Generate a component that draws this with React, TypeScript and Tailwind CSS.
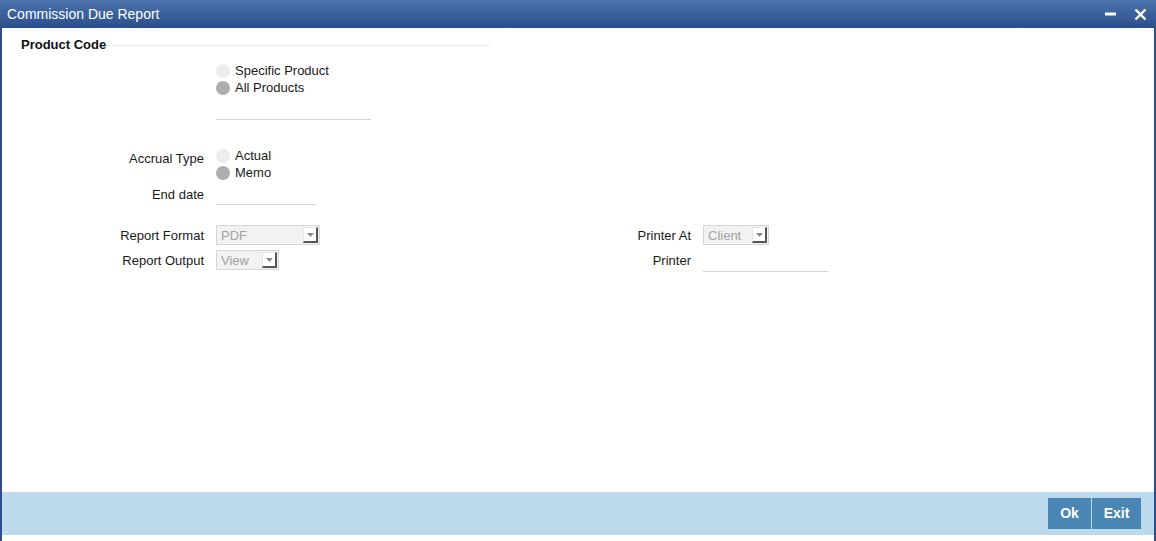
import React from "react";

function Radio(props: { checked?: boolean; label: string }) {
  return (
    <div className="flex items-center h-[17px]">
      <span
        className={
          "inline-block w-[14px] h-[14px] rounded-full " +
          (props.checked ? "bg-[#adadad]" : "bg-[#ececec]")
        }
      />
      <span className="ml-[5px] text-[13px] leading-[17px] text-[#1a1a1a]">{props.label}</span>
    </div>
  );
}

function Select(props: { value: string; width: string }) {
  return (
    <div
      className={
        "flex items-center justify-between h-[20px] border border-[#d6d6d6] bg-[#f2f2f2] pl-[4px] pr-[1px] " +
        props.width
      }
    >
      <span className="text-[13px] text-[#a3a3a3] leading-none">{props.value}</span>
      <span className="flex items-center justify-center w-[15px] h-[16px] bg-white border-r-2 border-b-2 border-[#555] border-l border-t border-l-[#e6e6e6] border-t-[#e6e6e6]">
        <svg width="7" height="4" viewBox="0 0 7 4">
          <path d="M0 0h7L3.5 4z" fill="#8a8a8a" />
        </svg>
      </span>
    </div>
  );
}

function Label(props: { text: string; w: string }) {
  return (
    <div className={"text-right text-[13px] leading-[17px] text-[#1a1a1a] pr-[12px] shrink-0 " + props.w}>
      {props.text}
    </div>
  );
}

export default function App() {
  return (
    <div
      className="w-[1156px] h-[541px] bg-white flex flex-col overflow-hidden"
      style={{ fontFamily: '"Liberation Sans", Arial, sans-serif' }}
    >
      <div className="h-[28px] shrink-0 flex items-center justify-between bg-gradient-to-b from-[#4c74ad] to-[#2b4e8b] px-[7px]">
        <span className="text-white text-[14px]">Commission Due Report</span>
        <div className="flex items-center gap-[18px] pr-[2px]">
          <svg width="11" height="4" viewBox="0 0 11 4">
            <rect width="11" height="3" y="0.5" fill="white" />
          </svg>
          <svg width="13" height="13" viewBox="0 0 13 13">
            <path d="M1.5 1.5l10 10M11.5 1.5l-10 10" stroke="white" strokeWidth="2.4" />
          </svg>
        </div>
      </div>

      <div className="flex-1 flex flex-col border-l-2 border-r-2 border-[#2b4e8b]">
        <div className="flex-1">
          <div className="flex items-center pt-[9px] pl-[19px] h-[25px]">
            <span className="text-[13px] leading-[16px] font-bold text-[#111]">Product Code</span>
            <span className="ml-[2px] w-[382px] h-px bg-[#ececec]" />
          </div>

          <div className="flex flex-col pl-[214px] mt-[9px]">
            <Radio label="Specific Product" />
            <Radio label="All Products" checked />
            <div className="mt-[23px] w-[155px] h-px bg-[#d4d4d4]" />
          </div>

          <div className="flex mt-[27px]">
            <Label text="Accrual Type" w="w-[214px] pt-[3px]" />
            <div className="flex flex-col">
              <Radio label="Actual" />
              <Radio label="Memo" checked />
            </div>
          </div>

          <div className="flex mt-[5px] items-start">
            <Label text="End date" w="w-[214px]" />
            <div className="w-[101px] h-[19px] border-b border-[#d4d4d4]" />
          </div>

          <div className="flex mt-[20px]">
            <div className="flex flex-col gap-[5px] w-[487px]">
              <div className="flex items-center">
                <Label text="Report Format" w="w-[214px]" />
                <Select value="PDF" width="w-[104px]" />
              </div>
              <div className="flex items-center">
                <Label text="Report Output" w="w-[214px]" />
                <Select value="View" width="w-[63px]" />
              </div>
            </div>
            <div className="flex flex-col gap-[5px]">
              <div className="flex items-center">
                <Label text="Printer At" w="w-[214px]" />
                <Select value="Client" width="w-[66px]" />
              </div>
              <div className="flex items-start">
                <Label text="Printer" w="w-[214px] pt-[2px]" />
                <div className="w-[125px] h-[22px] border-b border-[#d4d4d4]" />
              </div>
            </div>
          </div>
        </div>

        <div className="h-[43px] shrink-0 bg-[#bdd9ed] flex items-center justify-end pr-[13px] gap-px">
          <button className="h-[31px] w-[43px] bg-[#4a86b4] text-white text-[14px] font-bold">Ok</button>
          <button className="h-[31px] w-[49px] bg-[#4a86b4] text-white text-[14px] font-bold">Exit</button>
        </div>
      </div>
      <div className="h-[6px] shrink-0 bg-white border-l-2 border-r-2 border-[#2b4e8b]" />
    </div>
  );
}
